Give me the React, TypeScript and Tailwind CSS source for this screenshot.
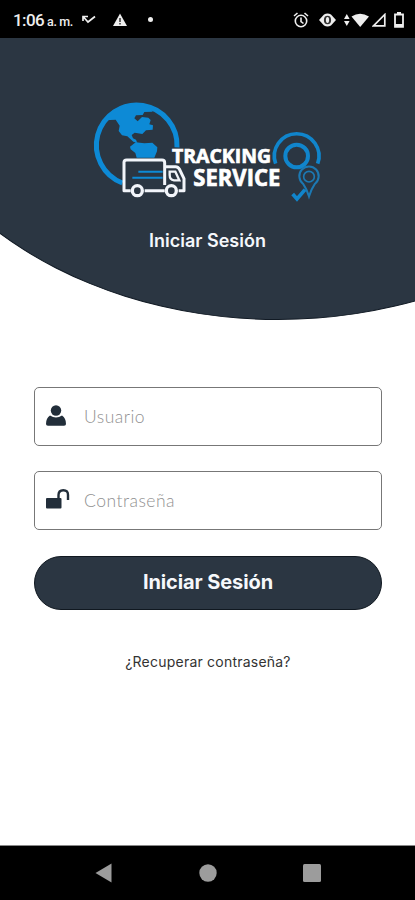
import { ReactNode } from "react";

function StatusBar() {
  return (
    <div className="relative z-10 flex h-[38px] shrink-0 items-center bg-black pl-[13px] pr-[11px] pt-px text-[#eeeeee]">
      <p className="w-[69px] whitespace-nowrap pt-0.5 font-['Roboto',sans-serif] text-[17px] font-medium tracking-[-0.6px]">
        1:06<span className="ml-[3px] text-[12.5px] tracking-[-0.4px]">a. m.</span>
      </p>
      <svg className="h-2.5 w-3.5" viewBox="0 0 14 10" fill="none" stroke="currentColor" strokeWidth="1.7">
        <path d="M1 6V1.500H6M1.500 2 6 7 13 1.500" />
      </svg>
      <svg className="ml-[17px] h-3.5 w-3.5" viewBox="0 0 14 14">
        <path d="M7 .5 14 13H0Z" fill="currentColor" />
        <path d="M7 5V9M7 10V11.500" stroke="#333" strokeWidth="1.500" />
      </svg>
      <span className="ml-[21px] h-[5px] w-[5px] rounded-full bg-current" />

      <svg className="ml-auto h-4 w-4" viewBox="0 0 16 16" fill="none" stroke="currentColor" strokeWidth="1.6">
        <circle cx="8" cy="9" r="5.700" />
        <path d="M1 4 4.500 1M15 4 11.500 1M8 5.500V9.500L10.500 11.500" />
      </svg>
      <svg className="ml-2.5 h-3.5 w-[17px]" viewBox="0 0 17 14">
        <path d="M0 7 5 1.500Q8.500-.5 12 1.500L17 7 12 12.500Q8.500 14.500 5 12.500Z" fill="currentColor" />
        <ellipse cx="8.500" cy="7" rx="3.600" ry="4.300" fill="#333" />
        <ellipse cx="8.500" cy="7" rx="1.600" ry="3" fill="currentColor" />
      </svg>
      <svg className="ml-2 h-3.5 w-[25px]" viewBox="0 0 25 14" fill="currentColor">
        <path d="M0 6 2.800 1 5.600 6ZM0 8 2.800 13 5.600 8Z" />
        <path d="M7.500 3.500Q16-2 25 3.500L16.200 14Z" />
      </svg>
      <svg className="ml-[3px] h-3.5 w-3.5" viewBox="0 0 14 14" fill="none" stroke="currentColor" strokeWidth="1.7">
        <path d="M1.500 12.800 12.800 1.500V12.800Z" />
      </svg>
      <svg className="ml-2 h-4 w-2.5" viewBox="0 0 10 16">
        <path d="M3 0H7V2H3Z" fill="currentColor" />
        <path d="M1 2.500H9V14.800H1Z" fill="none" stroke="currentColor" strokeWidth="1.800" />
        <path d="M1 12H9V15H1Z" fill="currentColor" />
      </svg>
    </div>
  );
}

function Logo() {
  return (
    <svg className="mt-[57px] ml-[85px] h-[115px] w-[245px] self-start" viewBox="0 0 735 345" fill="none">
      {/* globe */}
      <path d="M276 157A121 121 0 1 0 112 264" stroke="#0d8ad6" strokeWidth="15" />
      <path
        d="M60 76 82 47 120 30 165 28 196 40 203 50 178 51 173 60 153 61 148 70 158 79 171 66 190 68 197 75 193 88 204 91 203 104 183 106 172 117 149 113 140 120 144 130 153 134 157 144 145 140 127 124 111 121 101 108 104 92 92 74Z"
        fill="#0d8ad6"
      />
      <path d="M135 155 152 142 178 145 202 143 217 157 216 169 208 188H155L151 174 137 163Z" fill="#0d8ad6" />

      {/* truck */}
      <path d="M160 230H233M142 248H233" stroke="#0d8ad6" strokeWidth="6" />
      <path
        d="M137 287H117V202Q117 195 125 195H231Q239 195 239 203V270M239 287H179M239 215H272Q279 215 283 222L297 251V287H281"
        stroke="#f2f5fa"
        strokeWidth="9"
        strokeLinejoin="round"
      />
      <path d="M254 230H271L283 256H267Q254 254 254 240Z" stroke="#f2f5fa" strokeWidth="7" />
      <circle cx="157" cy="287" r="15" stroke="#f2f5fa" strokeWidth="10" />
      <circle cx="259" cy="287" r="15" stroke="#f2f5fa" strokeWidth="10" />

      <g fill="#fff" stroke="#fff" strokeWidth="2" fontFamily="'Open Sans', sans-serif" fontWeight="700">
        <text x="261" y="204" fontSize="58" textLength="297" lengthAdjust="spacingAndGlyphs">TRACKING</text>
        <text x="325" y="273" fontSize="67" textLength="261" lengthAdjust="spacingAndGlyphs">SERVICE</text>
      </g>

      {/* location pins */}
      <path d="M572 206A67 67 0 1 1 698 206" stroke="#1085cc" strokeWidth="11" />
      <circle cx="635" cy="183" r="34" stroke="#1085cc" strokeWidth="12" />
      <path d="M672 304Q665 282 654 266A29 29 0 1 1 690 266Q679 282 672 304Z" stroke="#1c79b3" strokeWidth="6" />
      <circle cx="672" cy="245" r="16" stroke="#1c79b3" strokeWidth="5" />
      <path d="M623 297 636 312 660 284" stroke="#1085cc" strokeWidth="11" />
    </svg>
  );
}

function Field({ icon, placeholder, type }: { icon: ReactNode; placeholder: string; type: string }) {
  return (
    <label className="flex h-[59px] items-center rounded-[5px] border border-[#777777] bg-white pl-[11px]">
      {icon}
      <input
        type={type}
        placeholder={placeholder}
        className="ml-[14px] min-w-0 flex-1 bg-transparent pt-0.5 font-['Lato',sans-serif] text-[17.5px] font-light tracking-[0.5px] text-gray-800 outline-none placeholder:text-[#909090]"
      />
    </label>
  );
}

export default function App() {
  return (
    <div className="flex h-[900px] w-[415px] flex-col overflow-hidden bg-white">
      <StatusBar />

      <header className="relative flex h-[283px] shrink-0 flex-col items-center overflow-hidden">
        <div className="absolute top-[-330px] left-[-122px] h-[612px] w-[800px] rounded-[50%] border border-[#111a24] bg-[#2b3642]" />
        <div className="relative flex w-full flex-col items-center">
          <Logo />
          <h1 className="mt-[19px] font-['Inter',sans-serif] text-[18px] leading-6 font-semibold text-[#f4f7fb]">
            Iniciar Sesión
          </h1>
        </div>
      </header>

      <main className="flex flex-1 flex-col pt-[66px] pr-[33px] pl-[34px]">
        <form className="flex flex-col">
          <Field
            type="text"
            placeholder="Usuario"
            icon={
              <svg className="h-6 w-6" viewBox="0 0 24 24" fill="#222e3a">
                <circle cx="10" cy="5.500" r="5.200" />
                <path d="M4 10.500Q10 14.500 16 10.500Q20 13 20 19Q20 20.800 18 20.800H2Q0 20.800 0 19Q0 13 4 10.500Z" />
              </svg>
            }
          />
          <div className="mt-[25px]">
            <Field
              type="password"
              placeholder="Contraseña"
              icon={
                <svg className="h-6 w-6" viewBox="0 0 24 24">
                  <rect x="0" y="9" width="15.500" height="10.500" rx="1" fill="#222e3a" />
                  <path d="M12.500 10V6Q12.500 1.200 17.300 1.200T22 6V11" fill="none" stroke="#222e3a" strokeWidth="2.400" />
                </svg>
              }
            />
          </div>
          <button
            type="button"
            className="mt-[26px] h-[54px] rounded-full border border-[#101820] bg-[#2b3642] pb-0.5 font-['Inter',sans-serif] text-[20px] font-bold tracking-[-0.1px] text-[#f6f8fb]"
          >
            Iniciar Sesión
          </button>
        </form>
        <a href="#" className="mt-[42px] text-center font-['Inter',sans-serif] text-[14px] leading-5 tracking-[0.22px] text-[#333333]">
          ¿Recuperar contraseña?
        </a>
      </main>

      <nav className="flex h-[55px] shrink-0 items-center justify-center border-t border-[#888888] bg-black text-[#9c9c9c]">
        <svg className="h-5 w-[232px]" viewBox="0 0 232 20" fill="currentColor">
          <path d="M3.500 10 19.500.5V19.500Z" />
          <circle cx="116" cy="10" r="8.700" />
          <rect x="211" y="1" width="18" height="18" rx="1.500" />
        </svg>
      </nav>
    </div>
  );
}
